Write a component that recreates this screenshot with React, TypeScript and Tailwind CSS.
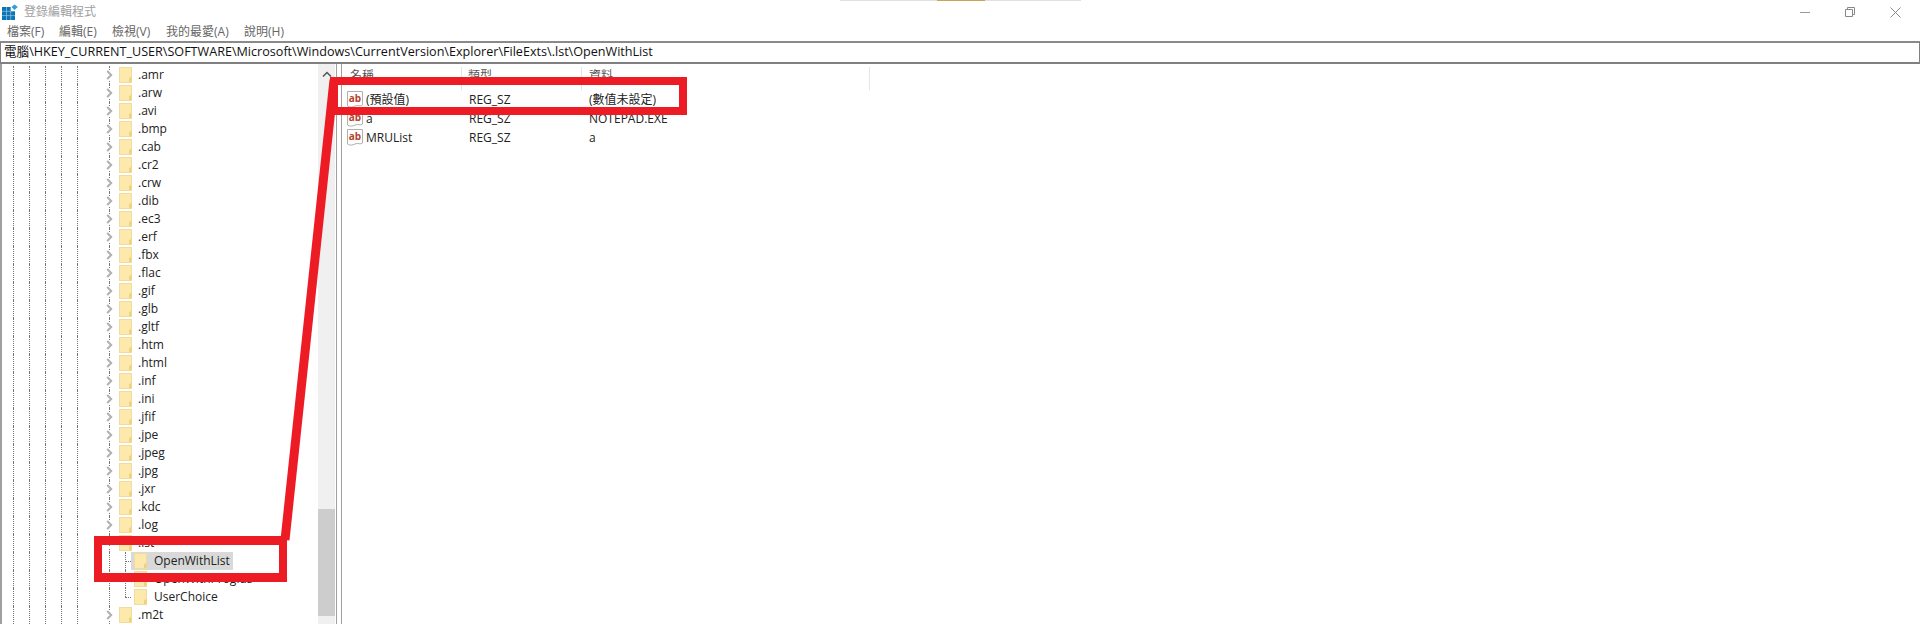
const exts = [".amr", ".arw", ".avi", ".bmp", ".cab", ".cr2", ".crw", ".dib", ".ec3", ".erf", ".fbx", ".flac", ".gif", ".glb", ".gltf", ".htm", ".html", ".inf", ".ini", ".jfif", ".jpe", ".jpeg", ".jpg", ".jxr", ".kdc", ".log"];
const children = ["OpenWithList", "OpenWithProgids", "UserChoice"];
const menus = [
  { label: "檔案(F)", width: "w-[52px]" },
  { label: "編輯(E)", width: "w-[53px]" },
  { label: "檢視(V)", width: "w-[54px]" },
  { label: "我的最愛(A)", width: "w-[78px]" },
  { label: "說明(H)", width: "w-[50px]" },
];
const values = [
  { name: "(預設值)", type: "REG_SZ", data: "(數值未設定)" },
  { name: "a", type: "REG_SZ", data: "NOTEPAD.EXE" },
  { name: "MRUList", type: "REG_SZ", data: "a" },
];

function RegIcon() {
  return (
    <svg width="16" height="16" viewBox="0 0 16 16" className="shrink-0">
      <rect x="0" y="3" width="13" height="13" fill="#0e74b5" />
      <path d="M4.5 3v13M8.7 3v13M0 7.3h13M0 11.6h13" stroke="#8fc6e6" strokeWidth="0.7" />
      <rect x="9" y="3" width="4" height="4" fill="#ffffff" />
      <path d="M9.5 3 12.5 0.5 15.8 3 12.5 6z" fill="#2f9fd8" />
    </svg>
  );
}

function Folder({ className }: { className?: string }) {
  return (
    <svg width="13" height="16" viewBox="0 0 13 16" className={className}>
      <rect x="0.5" y="0.5" width="12" height="15" fill="#fde9ab" stroke="#efdc9e" />
      <path d="M10 15V11l2.500-1v5z" fill="#f0d27e" />
    </svg>
  );
}

function AbIcon() {
  return (
    <svg width="16" height="17" viewBox="0 0 16 17" className="shrink-0">
      <path d="M0.500 0.500h15v13.500c-2 2-4.500-0.500-7.500 1s-5 1.500-7.500 0z" fill="#fff" stroke="#b8aea6" />
      <text x="8" y="10.500" textAnchor="middle" fontSize="10" fontWeight="700" fill="#b5432f">ab</text>
    </svg>
  );
}

function Chevron() {
  return (
    <svg width="7" height="10" viewBox="0 0 7 10">
      <path d="M1.200 1l4 4-4 4" fill="none" stroke="#b0b0b0" strokeWidth="2" />
    </svg>
  );
}

function Guides() {
  return (
    <div className="flex h-full shrink-0 pl-[13px]">
      <div className="w-4 border-l border-dotted border-[#777]" />
      <div className="w-4 border-l border-dotted border-[#777]" />
      <div className="w-4 border-l border-dotted border-[#777]" />
      <div className="w-4 border-l border-dotted border-[#777]" />
      <div className="w-4 border-l border-dotted border-[#777]" />
      <div className="w-4" />
    </div>
  );
}

function ExtRow({ name, open }: { name: string; open?: boolean }) {
  return (
    <div className="flex h-[18px] items-center">
      <Guides />
      <div className="relative h-full w-[10px] shrink-0 border-l border-dotted border-[#777]">
        <div className="absolute -left-[4px] top-[4px] flex h-[10px] w-[7px] items-center justify-center bg-white">
          {open ? (
            <svg width="7" height="7" viewBox="0 0 7 7"><path d="M0.500 1.500h6L3.500 6z" fill="#444" /></svg>
          ) : (
            <Chevron />
          )}
        </div>
      </div>
      <Folder className="shrink-0" />
      <span className="ml-[6px]">{name}</span>
    </div>
  );
}

function ChildRow({ name, selected, last }: { name: string; selected?: boolean; last?: boolean }) {
  return (
    <div className="flex h-[18px] items-center">
      <Guides />
      <div className="h-full w-4 shrink-0 border-l border-dotted border-[#777]" />
      <div className="relative h-full w-[6px] shrink-0">
        <div className={`absolute left-0 top-0 border-l border-dotted border-[#777] ${last ? "h-[9px]" : "h-full"}`} />
        <div className="absolute left-0 top-[9px] w-[6px] border-t border-dotted border-[#777]" />
      </div>
      <div className={`flex h-full items-center pl-[3px] pr-[3px] ${selected ? "bg-[#d9d9d9]" : ""}`}>
        <Folder className="shrink-0" />
        <span className="ml-[7px]">{name}</span>
      </div>
    </div>
  );
}

export default function App() {
  return (
    <div className="relative flex h-[624px] w-[1920px] flex-col overflow-hidden bg-white font-['Open_Sans','Noto_Sans_CJK_TC',sans-serif] text-[12px] text-[#222]">
      {/* title bar */}
      <div className="flex h-[23px] shrink-0 items-center pl-[2px] pt-[1px]">
        <RegIcon />
        <span className="ml-[6px] text-[#a0a0a0]">登錄編輯程式</span>
        <div className="ml-auto flex items-center gap-[35px] pr-[19px] text-[#8a8a8a]">
          <svg width="10" height="10" viewBox="0 0 10 10"><path d="M0 5.500h10" stroke="#999" /></svg>
          <svg width="10" height="10" viewBox="0 0 10 10"><path d="M0.500 2.500h7v7h-7zM2.500 2.500v-2h7v7h-2" fill="none" stroke="#888" /></svg>
          <svg width="11" height="11" viewBox="0 0 11 11"><path d="M0.500 0.500l10 10M10.500 0.500l-10 10" stroke="#888" /></svg>
        </div>
      </div>

      {/* menu bar */}
      <div className="flex h-[18px] shrink-0 items-center pl-[7px] text-[#666]">
        {menus.map((m) => (
          <span key={m.label} className={`${m.width} shrink-0`}>{m.label}</span>
        ))}
      </div>

      {/* address bar */}
      <div className="flex h-[23px] shrink-0 items-center border-x border-t-2 border-b-2 border-x-[#808080] border-t-[#8a8a8a] border-b-[#808080] pl-[3px] text-[12.6px] text-[#111]">
        電腦\HKEY_CURRENT_USER\SOFTWARE\Microsoft\Windows\CurrentVersion\Explorer\FileExts\.lst\OpenWithList
      </div>

      <div className="flex min-h-0 flex-1 border-l-2 border-[#a0a0a0]">
        {/* tree */}
        <div className="-ml-[2px] h-full w-[318px] shrink-0 overflow-hidden pt-[2px]">
          {exts.map((e) => (
            <ExtRow key={e} name={e} />
          ))}
          <ExtRow name=".lst" open />
          <ChildRow name={children[0]} selected />
          <ChildRow name={children[1]} />
          <ChildRow name={children[2]} last />
          <ExtRow name=".m2t" />
        </div>

        {/* tree scrollbar */}
        <div className="flex h-full w-[17px] shrink-0 flex-col items-center bg-[#f0f0f0]">
          <svg width="10" height="6" viewBox="0 0 10 6" className="mt-[7px] shrink-0">
            <path d="M1 5.500l4-4 4 4" fill="none" stroke="#555" strokeWidth="1.500" />
          </svg>
          <div className="mt-[432px] h-[107px] w-full shrink-0 bg-[#cdcdcd]" />
        </div>

        {/* splitter */}
        <div className="ml-[1px] h-full w-[6px] shrink-0 border-x border-[#a0a0a0]" />

        {/* value list */}
        <div className="min-w-0 flex-1">
          <div className="flex h-[26px] items-start pt-[3px] text-[#555]">
            <div className="h-full w-[120px] shrink-0 border-r border-[#e5e5e5] pl-[8px]">名稱</div>
            <div className="h-full w-[120px] shrink-0 border-r border-[#e5e5e5] pl-[6px]">類型</div>
            <div className="h-full w-[288px] shrink-0 border-r border-[#e5e5e5] pl-[7px]">資料</div>
          </div>
          {values.map((v) => (
            <div key={v.name} className="flex h-[19px] items-center">
              <div className="flex w-[120px] shrink-0 items-center pl-[5px]">
                <AbIcon />
                <span className="ml-[3px]">{v.name}</span>
              </div>
              <div className="w-[120px] shrink-0 pl-[7px]">{v.type}</div>
              <div className="pl-[7px]">{v.data}</div>
            </div>
          ))}
        </div>
      </div>

      {/* taskbar sliver along the top edge */}
      <div className="absolute left-[840px] top-0 flex h-px w-[241px] justify-center bg-[#e2e2e2]">
        <div className="h-px w-[48px] bg-[#c9a45a]" />
      </div>

      {/* red annotation */}
      <div className="absolute left-[330px] top-[77px] h-[38px] w-[357px] border-8 border-[#ed1c24]" />
      <div className="absolute left-[94px] top-[536px] h-[46px] w-[193px] border-[9px] border-x-8 border-[#ed1c24]" />
      <svg width="1920" height="624" className="pointer-events-none absolute left-0 top-0">
        <line x1="334" y1="80" x2="285" y2="540" stroke="#ed1c24" strokeWidth="9" />
      </svg>
    </div>
  );
}
